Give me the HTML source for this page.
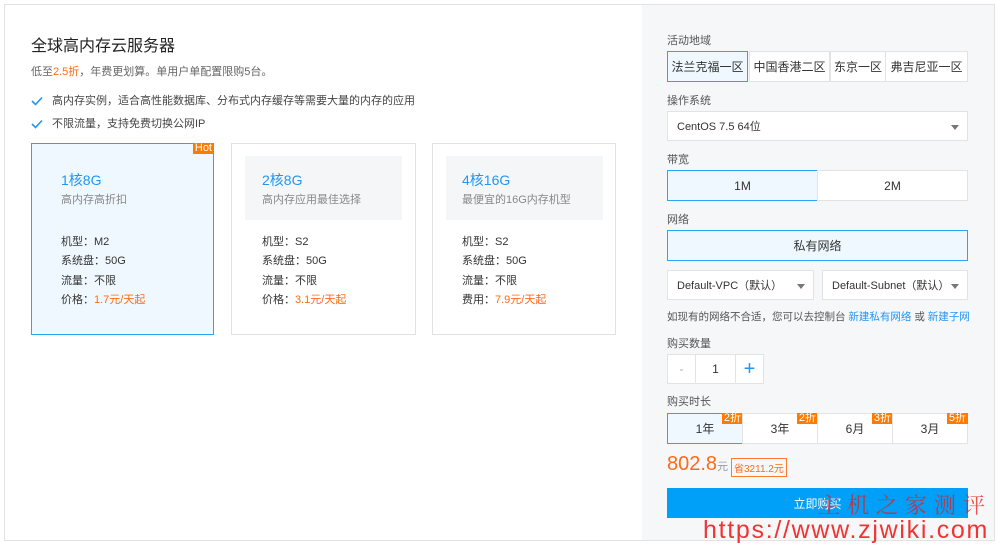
<!DOCTYPE html>
<html><head><meta charset="utf-8"><style>
*{box-sizing:border-box;margin:0;padding:0}
body{width:1000px;height:548px;background:#fff;font-family:"Liberation Sans","Noto Sans CJK SC",sans-serif;position:relative;overflow:hidden;color:#333}
.a{position:absolute;white-space:nowrap}
.frame{left:4px;top:4px;width:991px;height:537px;border:1px solid #e3e3e3}
.rp{left:642px;top:5px;width:352px;height:535px;background:#f6f7f9}
.t12{font-size:12px;line-height:14px}
.card{border:1px solid #e2e2e2;background:#fff}
.blue{color:#2196f3}
.org{color:#ff6a16}
.lbl{font-size:11px;color:#555;left:667px}
.btn{border:1px solid #e3e3e3;background:#fff;font-size:12px;display:flex;align-items:center;justify-content:center;color:#333}
.sel{border:1px solid #2aa5f5!important;background:#eff8fe!important}
.tri{position:absolute;right:8px;top:13px;border:4px solid transparent;border-top:5px solid #777}
.badge{position:absolute;top:-1px;right:-1px;background:#ff7a00;color:#fff;font-size:11px;line-height:11px;padding:0 2px}
.chk{position:absolute;left:31px}
</style></head><body>
<div class="a frame"></div>
<div class="a rp"></div>

<div class="a" style="left:31px;top:32px;font-size:16px;color:#222">全球高内存云服务器</div>
<div class="a t12" style="left:31px;top:65px;color:#666;font-size:11px">低至<span class="org">2.5折</span>，年费更划算。单用户单配置限购5台。</div>
<svg class="chk" style="top:96px" width="12" height="10" viewBox="0 0 12 10"><path d="M1 5 L4.5 8.5 L11 1.5" fill="none" stroke="#2196f3" stroke-width="1.6"/></svg>
<svg class="chk" style="top:119px" width="12" height="10" viewBox="0 0 12 10"><path d="M1 5 L4.5 8.5 L11 1.5" fill="none" stroke="#2196f3" stroke-width="1.6"/></svg>
<div class="a t12" style="left:52px;top:94px;color:#444;font-size:11px">高内存实例，适合高性能数据库、分布式内存缓存等需要大量的内存的应用</div>
<div class="a t12" style="left:52px;top:117px;color:#444;font-size:11px">不限流量，支持免费切换公网IP</div>

<div class="a card" style="left:31px;top:143px;width:183px;height:192px;border-color:#2aa5f5;background:#eff8fe"><div class="badge" style="font-size:11px">Hot</div></div>
<div class="a card" style="left:231px;top:143px;width:185px;height:192px"><div class="a" style="left:13px;top:12px;width:157px;height:64px;background:#f5f6f8"></div></div>
<div class="a card" style="left:432px;top:143px;width:184px;height:192px"><div class="a" style="left:13px;top:12px;width:157px;height:64px;background:#f5f6f8"></div></div>

<div class="a blue" style="left:61px;top:170px;font-size:14px">1核8G</div>
<div class="a t12" style="left:61px;top:193px;color:#888;font-size:11px">高内存高折扣</div>
<div class="a" style="left:61px;top:233px;font-size:11px;line-height:19.3px;color:#333">机型：M2<br>系统盘：50G<br>流量：不限<br>价格：<span class="org">1.7元/天起</span></div>

<div class="a blue" style="left:262px;top:170px;font-size:14px">2核8G</div>
<div class="a t12" style="left:262px;top:193px;color:#888;font-size:11px">高内存应用最佳选择</div>
<div class="a" style="left:262px;top:233px;font-size:11px;line-height:19.3px;color:#333">机型：S2<br>系统盘：50G<br>流量：不限<br>价格：<span class="org">3.1元/天起</span></div>

<div class="a blue" style="left:462px;top:170px;font-size:14px">4核16G</div>
<div class="a t12" style="left:462px;top:193px;color:#888;font-size:11px">最便宜的16G内存机型</div>
<div class="a" style="left:462px;top:233px;font-size:11px;line-height:19.3px;color:#333">机型：S2<br>系统盘：50G<br>流量：不限<br>费用：<span class="org">7.9元/天起</span></div>

<div class="a lbl" style="top:32px">活动地域</div>
<div class="a btn sel" style="left:667px;top:51px;width:81px;height:31px">法兰克福一区</div>
<div class="a btn" style="left:749px;top:51px;width:81px;height:31px">中国香港二区</div>
<div class="a btn" style="left:830px;top:51px;width:56px;height:31px">东京一区</div>
<div class="a btn" style="left:885px;top:51px;width:83px;height:31px">弗吉尼亚一区</div>

<div class="a lbl" style="top:92px">操作系统</div>
<div class="a btn" style="left:667px;top:111px;width:301px;height:30px;justify-content:flex-start;padding-left:9px;font-size:11px">CentOS 7.5 64位<span class="tri"></span></div>

<div class="a lbl" style="top:151px">带宽</div>
<div class="a btn sel" style="left:667px;top:170px;width:151px;height:31px">1M</div>
<div class="a btn" style="left:817px;top:170px;width:151px;height:31px">2M</div>

<div class="a lbl" style="top:211px">网络</div>
<div class="a btn sel" style="left:667px;top:230px;width:301px;height:31px">私有网络</div>
<div class="a btn" style="left:667px;top:270px;width:147px;height:30px;justify-content:flex-start;padding-left:9px;font-size:11px">Default-VPC（默认）<span class="tri"></span></div>
<div class="a btn" style="left:822px;top:270px;width:146px;height:30px;justify-content:flex-start;padding-left:9px;font-size:11px">Default-Subnet（默认）<span class="tri"></span></div>
<div class="a" style="left:667px;top:309px;font-size:10.5px;color:#555">如现有的网络不合适，您可以去控制台 <span class="blue">新建私有网络</span> 或 <span class="blue">新建子网</span></div>

<div class="a lbl" style="top:335px">购买数量</div>
<div class="a btn" style="left:667px;top:354px;width:29px;height:30px;color:#aaa">-</div>
<div class="a btn" style="left:695px;top:354px;width:41px;height:30px">1</div>
<div class="a btn" style="left:735px;top:354px;width:29px;height:30px;color:#2196f3;font-size:20px">+</div>

<div class="a lbl" style="top:393px">购买时长</div>
<div class="a btn sel" style="left:667px;top:413px;width:76px;height:31px">1年<span class="badge">2折</span></div>
<div class="a btn" style="left:742px;top:413px;width:76px;height:31px">3年<span class="badge">2折</span></div>
<div class="a btn" style="left:817px;top:413px;width:76px;height:31px">6月<span class="badge">3折</span></div>
<div class="a btn" style="left:892px;top:413px;width:76px;height:31px">3月<span class="badge">5折</span></div>

<div class="a org" style="left:667px;top:453px;font-size:20px">802.8<span style="font-size:11px;color:#999">元</span></div>
<div class="a org" style="left:731px;top:458px;border:1px solid #ff7a30;font-size:10px;padding:1px 2px">省3211.2元</div>

<div class="a" style="left:667px;top:488px;width:301px;height:30px;background:#009ff8;color:#fff;font-size:12px;display:flex;align-items:center;justify-content:center">立即购买</div>

<div class="a" style="left:818px;top:492px;font-size:22px;color:rgba(230,30,30,.75);letter-spacing:7px;font-family:'Noto Serif CJK SC',serif;line-height:26px">主机之家测评</div>
<div class="a" style="left:703px;top:515px;font-size:25px;color:rgba(240,30,30,.9);font-family:'Liberation Sans',sans-serif;line-height:30px;letter-spacing:1.7px">https://www.zjwiki.com</div>
</body></html>
